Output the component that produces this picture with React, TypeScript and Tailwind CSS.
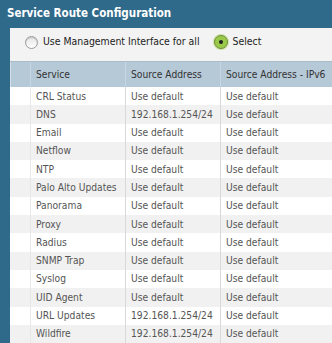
const rows: [string, string][] = [
  ["CRL Status", "Use default"],
  ["DNS", "192.168.1.254/24"],
  ["Email", "Use default"],
  ["Netflow", "Use default"],
  ["NTP", "Use default"],
  ["Palo Alto Updates", "Use default"],
  ["Panorama", "Use default"],
  ["Proxy", "Use default"],
  ["Radius", "Use default"],
  ["SNMP Trap", "Use default"],
  ["Syslog", "Use default"],
  ["UID Agent", "Use default"],
  ["URL Updates", "192.168.1.254/24"],
  ["Wildfire", "192.168.1.254/24"],
];

export default function App() {
  return (
    <div
      className="w-[332px] h-[343px] overflow-hidden bg-[#2f6a8b] flex flex-col"
      style={{ fontFamily: '"DejaVu Sans Condensed", "DejaVu Sans", sans-serif', fontStretch: "condensed" }}
    >
      <div className="h-[28px] shrink-0 px-[7px] flex items-center text-white font-bold text-[11.5px]">
        Service Route Configuration
      </div>

      <div className="flex-1 ml-[10px] bg-[#f3f3f3] flex flex-col">
        <div className="h-[28px] mb-[5px] flex items-center pl-[15px] text-[10.4px] text-[#222]">
          <span className="w-[13px] h-[13px] rounded-full border border-[#9a9a9a] bg-gradient-to-b from-[#e4e4e4] to-white shadow-[inset_0_1px_1px_rgba(0,0,0,0.15)]" />
          <span className="ml-[5px]">Use Management Interface for all</span>
          <span className="ml-[14px] w-[14px] h-[14px] rounded-full border border-[#6f8f3a] bg-[#9bc94a] shadow-[0_0_0_1px_#cfe3a8] flex items-center justify-center">
            <span className="w-[4px] h-[4px] rounded-full bg-[#222]" />
          </span>
          <span className="ml-[5px]">Select</span>
        </div>

        <div className="grid grid-cols-[21px_95px_95px_1fr] h-[26px] bg-[#b6c9d7] border-t border-[#a9bccb] text-[10.2px] text-[#333]">
          <div className="border-l border-[#d3dfe8] border-r border-r-[#c6d6e2]" />
          <div className="flex items-center pl-[5px] border-r border-[#c6d6e2]">Service</div>
          <div className="flex items-center pl-[5px] border-r border-[#c6d6e2]">Source Address</div>
          <div className="flex items-center pl-[5px] whitespace-nowrap">Source Address - IPv6</div>
        </div>

        {rows.map(([name, addr], i) => (
          <div
            key={name}
            className={`grid grid-cols-[21px_95px_95px_1fr] h-[18.3px] text-[10.2px] text-[#555] ${
              i % 2 === 0 ? "bg-white" : "bg-[#f1f1f1]"
            }`}
          >
            <div className="border-r border-[#e8e8e8]" />
            <div className="flex items-center pl-[5px] border-r border-[#d9d9d9] whitespace-nowrap">{name}</div>
            <div className="flex items-center pl-[5px] border-r border-[#d9d9d9] whitespace-nowrap">{addr}</div>
            <div className="flex items-center pl-[5px] whitespace-nowrap">Use default</div>
          </div>
        ))}
      </div>
    </div>
  );
}
